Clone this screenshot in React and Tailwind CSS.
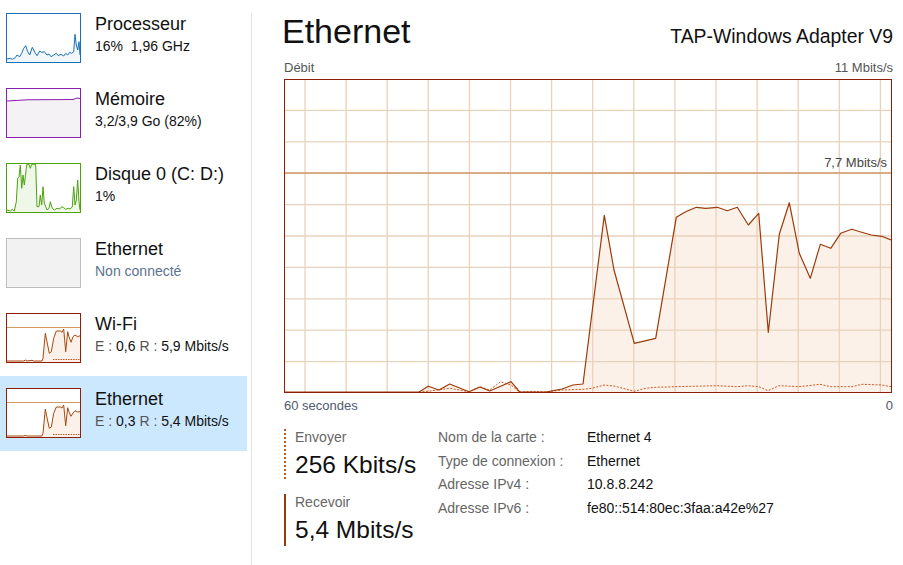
import React from 'react'

const cpuPts = '0,45 3.3,44.3 5.3,45.3 8.3,43.7 10,41 12.7,42.7 14.7,39.3 16.7,34.3 18.7,31.7 20.7,37.7 22.7,41 25.3,33.3 28,38.7 30,41.7 32.7,37 34.7,38.3 37.3,37.7 40,41 42,40 44,42.7 46.7,41 49.3,39.3 51.3,41.7 54,40.3 56.7,42 58.7,39.3 60.7,41 62.7,38.3 64.7,39.3 66.7,37.7 68,20.3 69.3,31 70.7,36 72,27.7 73,41'
const memPts = '0,12 20,10.8 66,10.5 70,9 73,9.5'
const diskPts = '0,46 3.3,47 5.3,45.3 7.3,47 9.3,37.7 10.7,14.3 12,12.7 13.3,1 14.7,24.3 16,11 17.3,21 19.3,4.3 20,0.3 22,0.3 23.3,4.3 24.7,0.3 26.7,0.3 28.7,0.3 30,42.7 32,42.7 33.3,31 34.7,41 36,22.7 37.3,39.3 38.7,42.7 40,46 42,44.3 43.3,37.7 45.3,44.3 47.3,46 50,44.3 52.7,45 54.7,42.7 56.7,43.7 58.7,45.3 61.3,44.3 63.3,45 65.3,42.7 66.7,22.7 68,41 69.3,36 70.7,16 72,37.7 73,46'
const wifiPts = '0,47 16.7,47 18.3,46 20,47 25,46.3 26.7,47 35,47 36,44.3 38.3,19.3 40,27.7 42.3,39.3 44.3,37.7 46.7,24.3 49.3,17 53.3,17 55,18.3 56.7,15 58.7,37.7 60.7,17.7 62,22.7 64,28.3 66,22.7 68,21 70.7,22.7 73,21.7'
const ethPts = '0,47 16.7,47 18.3,46.3 20,47 26.7,47 35,47 36,44.3 38.3,20 40,28.7 42.3,39.3 44.3,38 46.7,24.3 49.3,18 53.3,18 55,19 56.7,16 58.7,36.7 60.7,18.7 62,23 64,27.3 66,24 68,21.7 70.7,23 73,22.7'

const recvPts = '0,312 134,312 143.3,306.3 154,310 164.7,304 184,311.7 195,307 204.7,311 226,301.7 234.7,312 260.7,312 277,309 288,305 298,304 319.3,135.3 329,190 349.3,263.3 370.7,258.3 391.3,137.3 400.7,131.7 411.3,127.3 420.7,128.3 432.3,127.3 442.3,130.7 452.3,127.3 463.3,145 473.7,133.3 483.3,252.3 494.3,154.3 504.3,122.7 514.3,173.3 525.3,198.3 535.3,164.3 545.7,168.3 555.7,153.3 566.7,149.3 576.7,152.3 586.3,155 596.7,156.3 606,160'
const sendPts = '134,312 143,311.3 164.7,308.3 184,311.7 195,306.7 204.7,310 215.7,301.7 226,305 234.7,312 247,311.3 260.7,312 277,310 298,309.3 307,308.3 319,305 329,306 349,311.3 360.7,308.3 370.7,307.3 391,306.7 432,305.7 452,306.7 463,305.7 474,306.7 483,310.7 494,305.7 514,306.7 535,304.3 546,306.7 567,306.7 577,304.3 597,305 606,306.7'

function Thumb({ kind }) {
  if (kind === 'off') {
    return <div className="w-[75px] h-[50px] border border-[#bdbdbd] bg-[#f2f2f2] shrink-0" />
  }
  const cfg = {
    cpu: { border: 'border-[#1a6fb5]', stroke: '#1a6fb5', fill: '#f1f6fb', pts: cpuPts },
    mem: { border: 'border-[#8a1fae]', stroke: '#8a1fae', fill: '#f4f2f4', pts: memPts },
    disk: { border: 'border-[#4aa20c]', stroke: '#4aa20c', fill: '#eff7e9', pts: diskPts },
    wifi: { border: 'border-[#8f1e08]', stroke: '#a8480e', fill: '#fcf1e8', pts: wifiPts, net: true },
    eth: { border: 'border-[#8f1e08]', stroke: '#a8480e', fill: '#fcf1e8', pts: ethPts, net: true },
  }[kind]
  return (
    <div className={`w-[75px] h-[50px] border ${cfg.border} bg-white shrink-0`}>
      <svg width="73" height="48" viewBox="0 0 73 48" className="block">
        <polygon points={`0,48 ${cfg.pts} 73,48`} fill={cfg.fill} />
        {cfg.net && <line x1="0" y1="13.5" x2="73" y2="13.5" stroke="#d49a66" strokeWidth="1" />}
        {cfg.net && <line x1="46" y1="45.5" x2="73" y2="45.5" stroke="#c8541e" strokeWidth="1" strokeDasharray="1.5 1" />}
        <polyline points={cfg.pts} fill="none" stroke={cfg.stroke} strokeWidth="1" strokeLinejoin="round" />
      </svg>
    </div>
  )
}

const items = [
  { kind: 'cpu', title: 'Processeur', sub: <span>16%&nbsp;&nbsp;1,96 GHz</span> },
  { kind: 'mem', title: 'Mémoire', sub: <span>3,2/3,9 Go (82%)</span> },
  { kind: 'disk', title: 'Disque 0 (C: D:)', sub: <span>1%</span> },
  { kind: 'off', title: 'Ethernet', sub: <span className="text-[#5b7391]">Non connecté</span> },
  { kind: 'wifi', title: 'Wi-Fi', sub: <span><span className="text-[#555]">E :</span> 0,6 <span className="text-[#555]">R :</span> 5,9 Mbits/s</span> },
  { kind: 'eth', title: 'Ethernet', sub: <span><span className="text-[#555]">E :</span> 0,3 <span className="text-[#555]">R :</span> 5,4 Mbits/s</span>, active: true },
]

function Sidebar() {
  return (
    <div className="w-[247px] pt-px">
      {items.map((it, i) => (
        <div key={i} className={`h-[75px] flex items-start pt-[12px] pl-[6px] gap-[14px] ${it.active ? 'bg-[#cce8ff]' : ''}`}>
          <Thumb kind={it.kind} />
          <div className="text-[#111]">
            <div className="text-[18px] leading-[22px]">{it.title}</div>
            <div className="text-[14px] leading-[18px] mt-[2px]">{it.sub}</div>
          </div>
        </div>
      ))}
    </div>
  )
}

function Chart() {
  const vlines = Array.from({ length: 15 }, (_, k) => 20 + 41.1 * k)
  const hlines = Array.from({ length: 9 }, (_, k) => 31.4 * (k + 1) - 1)
  return (
    <div className="relative w-[608px] h-[314px] border border-[#8f1e08] bg-white">
      <svg width="606" height="312" viewBox="0 0 606 312" className="block">
        <polygon points={`${recvPts} 606,312`} fill="#fcf1e8" />
        {vlines.map((x, i) => (
          <line key={'v' + i} x1={x} y1="0" x2={x} y2="312" stroke="#e9d2bb" strokeWidth="1.3" />
        ))}
        {hlines.map((y, i) => (
          <line key={'h' + i} x1="0" y1={y} x2="606" y2={y} stroke="#e9d2bb" strokeWidth="1.3" />
        ))}
        <line x1="0" y1="93" x2="606" y2="93" stroke="#cf9a6c" strokeWidth="1.5" />
        <polyline points={sendPts} fill="none" stroke="#d0581f" strokeWidth="1" strokeDasharray="2 1.5" />
        <polyline points={recvPts} fill="none" stroke="#9c3a0a" strokeWidth="1.2" strokeLinejoin="round" />
      </svg>
      <div className="absolute right-[4px] top-[75px] text-[13px] leading-[15px] text-[#444]">7,7 Mbits/s</div>
    </div>
  )
}

export default function App() {
  return (
    <div className="w-[903px] h-[565px] bg-white flex font-['Liberation_Sans',Arial,sans-serif] overflow-hidden">
      <Sidebar />
      <div className="w-[4px]" />
      <div className="w-px bg-[#e3e3e3] mt-[13px]" />
      <div className="flex-1 pl-[32px] pr-[10px]">
        <div className="flex items-baseline justify-between pt-[14px]">
          <div className="text-[34px] leading-[34px] text-[#111] -ml-[2px]">Ethernet</div>
          <div className="text-[19.4px] leading-[24px] text-[#111]">TAP-Windows Adapter V9</div>
        </div>
        <div className="flex justify-between mt-[12px] text-[13px] leading-[15px] text-[#555]">
          <span>Débit</span>
          <span>11 Mbits/s</span>
        </div>
        <div className="mt-[4px]">
          <Chart />
        </div>
        <div className="flex justify-between mt-[5px] text-[13px] leading-[15px] text-[#4f5a70]">
          <span>60 secondes</span>
          <span>0</span>
        </div>
        <div className="flex items-start mt-[13px]">
          <div className="w-[154px] pt-[3px] flex flex-col gap-[15px]">
            <div className="flex gap-[9px]">
              <div className="w-[2px] h-[50px] border-l-2 border-dotted border-[#c8541e]" />
              <div>
                <div className="text-[14px] leading-[16px] text-[#666]">Envoyer</div>
                <div className="text-[24.5px] leading-[28px] text-[#111] mt-[6px]">256 Kbits/s</div>
              </div>
            </div>
            <div className="flex gap-[9px]">
              <div className="w-[2px] h-[52px] bg-[#a0380e]" />
              <div>
                <div className="text-[14px] leading-[16px] text-[#666]">Recevoir</div>
                <div className="text-[24.5px] leading-[28px] text-[#111] mt-[6px]">5,4 Mbits/s</div>
              </div>
            </div>
          </div>
          <div className="grid content-start grid-cols-[149px_auto] text-[14px] leading-[23.5px]">
            <span className="text-[#666]">Nom de la carte :</span>
            <span className="text-[#111]">Ethernet 4</span>
            <span className="text-[#666]">Type de connexion :</span>
            <span className="text-[#111]">Ethernet</span>
            <span className="text-[#666]">Adresse IPv4 :</span>
            <span className="text-[#111]">10.8.8.242</span>
            <span className="text-[#666]">Adresse IPv6 :</span>
            <span className="text-[#111]">fe80::514:80ec:3faa:a42e%27</span>
          </div>
        </div>
      </div>
    </div>
  )
}
